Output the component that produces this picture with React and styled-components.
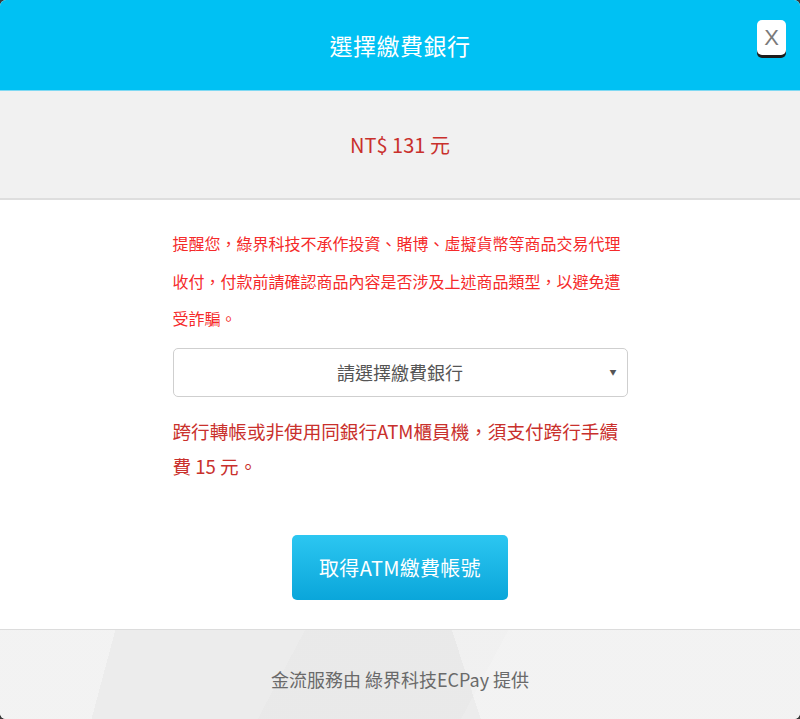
import React from "react";
import styled, { createGlobalStyle } from "styled-components";

const GlobalStyle = createGlobalStyle`
  html, body {
    margin: 0;
    padding: 0;
    background: #3a3a3a;
  }
  body {
    font-family: "Noto Sans CJK TC", "Noto Sans", sans-serif;
  }
`;

const Modal = styled.div`
  width: 800px;
  height: 719px;
  display: flex;
  flex-direction: column;
  border-radius: 6px;
  overflow: hidden;
  background: #fff;
  position: relative;
`;

const Header = styled.header`
  height: 90px;
  flex: none;
  background: #00c1f3;
  border-bottom: 1px solid #7fd9f3;
  display: flex;
  align-items: center;
  justify-content: center;
`;

const Title = styled.h1`
  margin: 0;
  font-size: 23px;
  font-weight: 400;
  color: #fff;
  letter-spacing: 0.5px;
`;

const CloseButton = styled.button`
  position: absolute;
  top: 20px;
  right: 14px;
  width: 29px;
  height: 35px;
  padding: 0;
  border: none;
  border-radius: 5px;
  background: #fff;
  box-shadow: 0 3px 0 #1c1c1c;
  color: #7a7a7a;
  font-family: "Liberation Sans", sans-serif;
  font-size: 22px;
  line-height: 35px;
  cursor: pointer;
`;

const AmountBand = styled.div`
  height: 107px;
  flex: none;
  background: #f1f1f1;
  border-bottom: 2px solid #dedede;
  display: flex;
  align-items: center;
  justify-content: center;
`;

const Amount = styled.span`
  font-size: 20px;
  color: #c9302c;
`;

const Body = styled.main`
  flex: 1;
  display: flex;
  flex-direction: column;
  align-items: center;
  padding-top: 25px;
`;

const Column = styled.div`
  width: 455px;
  display: flex;
  flex-direction: column;
`;

const Notice = styled.p`
  margin: 0;
  font-size: 16px;
  line-height: 37.5px;
  color: #f52a2a;
`;

const Select = styled.div`
  margin-top: 10px;
  height: 47px;
  border: 1px solid #cfcfcf;
  border-radius: 5px;
  display: flex;
  align-items: center;
  justify-content: center;
  position: relative;
  font-size: 18px;
  color: #555;
`;

const Arrow = styled.span`
  position: absolute;
  right: 10px;
  top: 50%;
  transform: translateY(-50%);
  font-size: 7px;
  color: #555;
`;

const Fee = styled.p`
  margin: 16px 0 0;
  font-size: 18.6px;
  line-height: 35px;
  color: #c9302c;
`;

const ActionButton = styled.button`
  margin-top: 52px;
  width: 216px;
  height: 65px;
  border: none;
  border-radius: 5px;
  background: linear-gradient(to bottom, #2cc6f1 0%, #0aa6da 100%);
  color: #fff;
  font-family: inherit;
  font-size: 20px;
  letter-spacing: 0.3px;
  cursor: pointer;
`;

const Footer = styled.footer`
  height: 90px;
  flex: none;
  border-top: 1px solid #dcdcdc;
  background:
    linear-gradient(105deg, rgba(255, 255, 255, 0.35) 0 14%, transparent 14% 100%),
    linear-gradient(72deg, transparent 0 58%, rgba(255, 255, 255, 0.35) 58% 100%),
    linear-gradient(118deg, transparent 0 36%, rgba(0, 0, 0, 0.012) 36% 60%, transparent 60%),
    #ececec;
  display: flex;
  align-items: center;
  justify-content: center;
  padding-top: 8px;
  box-sizing: border-box;
`;

const Credit = styled.span`
  font-size: 18px;
  color: #6a6a6a;
`;

const App = () => (
  <>
    <GlobalStyle />
    <Modal>
      <Header>
        <Title>選擇繳費銀行</Title>
      </Header>
      <CloseButton>X</CloseButton>
      <AmountBand>
        <Amount>NT$ 131 元</Amount>
      </AmountBand>
      <Body>
        <Column>
          <Notice>
            提醒您，綠界科技不承作投資、賭博、虛擬貨幣等商品交易代理收付，付款前請確認商品內容是否涉及上述商品類型，以避免遭受詐騙。
          </Notice>
          <Select>
            請選擇繳費銀行
            <Arrow>▼</Arrow>
          </Select>
          <Fee>跨行轉帳或非使用同銀行ATM櫃員機，須支付跨行手續費 15 元。</Fee>
        </Column>
        <ActionButton>取得ATM繳費帳號</ActionButton>
      </Body>
      <Footer>
        <Credit>金流服務由 綠界科技ECPay 提供</Credit>
      </Footer>
    </Modal>
  </>
);

export default App;
